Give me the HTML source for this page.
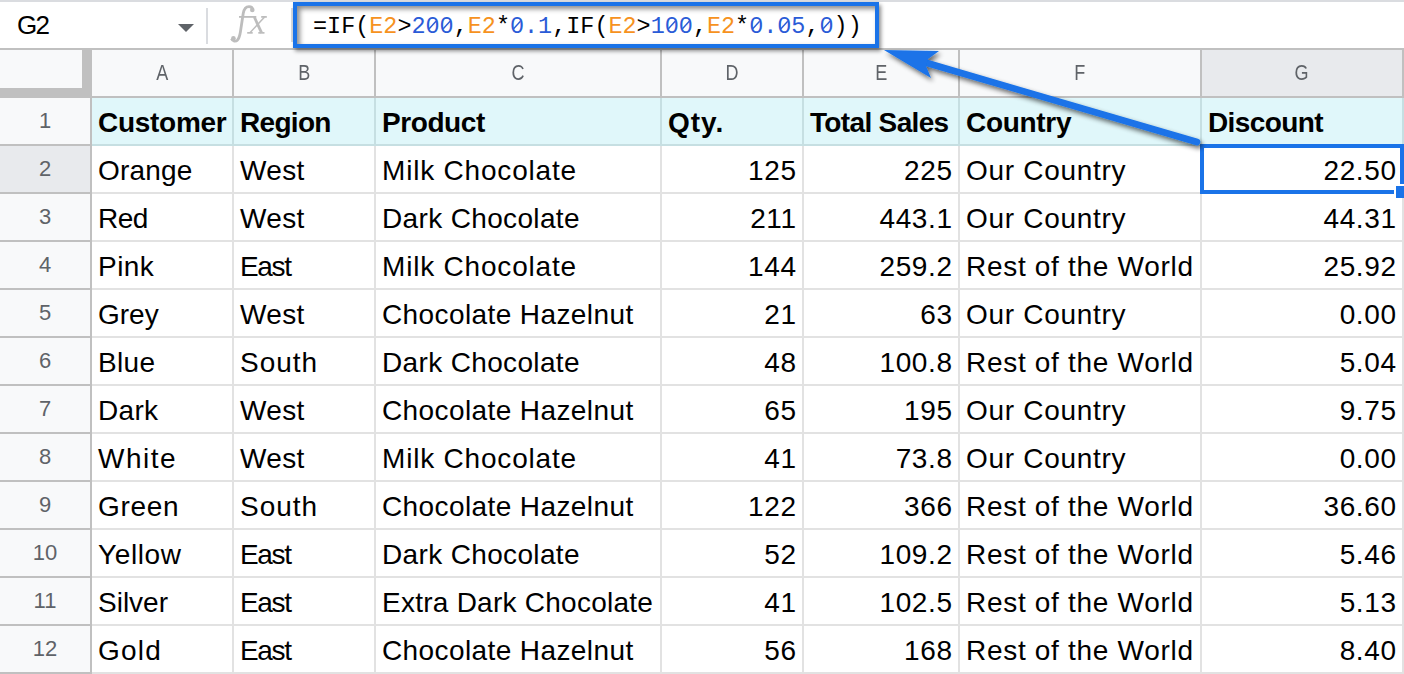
<!DOCTYPE html>
<html><head><meta charset="utf-8"><style>
html,body{margin:0;padding:0;}
body{width:1404px;height:674px;position:relative;overflow:hidden;background:#fff;font-family:"Liberation Sans",sans-serif;}
body>div{position:absolute;}
.nb{font-size:26px;line-height:34px;color:#000;}
.fx{font-family:"Liberation Serif",serif;font-style:italic;font-size:40px;line-height:46px;color:#bdbdbd;}
.ch{font-size:22px;line-height:46px;text-align:center;color:#5f6368;}
.ch span{display:inline-block;transform:scaleX(0.82);}
.rh{font-size:22px;line-height:46px;text-align:center;color:#5f6368;}
.c{font-size:28px;line-height:46px;color:#000;white-space:nowrap;}
.b{font-weight:bold;}
.n{text-align:right;}
.fbox{box-sizing:border-box;border:4px solid #1a73e8;box-shadow:2px 3px 4px rgba(0,0,0,.45), inset 3px 3px 5px rgba(0,0,0,.45);}
.ftxt{font-family:"Liberation Mono",monospace;font-size:23.45px;line-height:34px;white-space:nowrap;}
.k{color:#000;} .o{color:#f6921e;} .u{color:#2a5bd7;}
</style></head><body>
<div style="left:0px;top:0px;width:1404px;height:2px;background:#dadce0"></div>
<div style="left:0px;top:48px;width:1404px;height:2px;background:#c0c0c0"></div>
<div class="nb" style="left:17px;top:7.5px;letter-spacing:-1.6px">G2</div>
<svg style="position:absolute;left:178px;top:24px" width="16" height="8"><path d="M0 0H16L8 8Z" fill="#5f6368"/></svg>
<div style="left:206px;top:8px;width:2px;height:36px;background:#dadce0"></div>
<svg style="position:absolute;left:0;top:0" width="300" height="48"><g fill="none" stroke="#bdbdbd" stroke-linecap="butt">
<path d="M231.5 38.8 C232.6 41.4 235.6 41.9 237.6 39.9 C239.2 38.1 239.9 35 240.4 32 L243.2 13.5 C244 8.6 246 6.6 249 6.6 C251 6.6 252.5 7.6 252.7 9.6" stroke-width="2.8"/>
<line x1="254.3" y1="17" x2="261.6" y2="32.8" stroke-width="2.8"/>
<line x1="264.6" y1="17" x2="249.9" y2="32.8" stroke-width="1.5"/>
</g><g fill="#bdbdbd"><circle cx="233.4" cy="38.3" r="2.3"/><circle cx="252.3" cy="9.9" r="2.3"/>
<rect x="239" y="16" width="17.3" height="1.8"/><rect x="261.2" y="16" width="5.6" height="1.8"/>
<rect x="247.2" y="32" width="5.5" height="1.7"/><rect x="258.3" y="32" width="6.2" height="1.7"/></g></svg>
<div style="left:291px;top:8px;width:2px;height:34px;background:#dadce0"></div>
<div style="left:92px;top:50px;width:1312px;height:46px;background:#f8f9fa"></div>
<div style="left:1202px;top:50px;width:200px;height:46px;background:#e8eaed"></div>
<div style="left:0px;top:50px;width:82px;height:38px;background:#f8f9fa"></div>
<div class="ch" style="left:92px;top:50px;width:140px"><span>A</span></div>
<div class="ch" style="left:234px;top:50px;width:140px"><span>B</span></div>
<div class="ch" style="left:376px;top:50px;width:284px"><span>C</span></div>
<div class="ch" style="left:662px;top:50px;width:140px"><span>D</span></div>
<div class="ch" style="left:804px;top:50px;width:154px"><span>E</span></div>
<div class="ch" style="left:960px;top:50px;width:240px"><span>F</span></div>
<div class="ch" style="left:1202px;top:50px;width:200px"><span>G</span></div>
<div style="left:232px;top:50px;width:2px;height:46px;background:#c0c0c0"></div>
<div style="left:374px;top:50px;width:2px;height:46px;background:#c0c0c0"></div>
<div style="left:660px;top:50px;width:2px;height:46px;background:#c0c0c0"></div>
<div style="left:802px;top:50px;width:2px;height:46px;background:#c0c0c0"></div>
<div style="left:958px;top:50px;width:2px;height:46px;background:#c0c0c0"></div>
<div style="left:1200px;top:50px;width:2px;height:46px;background:#c0c0c0"></div>
<div style="left:1402px;top:50px;width:2px;height:46px;background:#c0c0c0"></div>
<div style="left:0px;top:96px;width:1404px;height:2px;background:#c0c0c0"></div>
<div style="left:82px;top:48px;width:10px;height:50px;background:#c0c0c0"></div>
<div style="left:0px;top:88px;width:92px;height:10px;background:#c0c0c0"></div>
<div style="left:0px;top:98px;width:90px;height:46px;background:#f8f9fa"></div>
<div style="left:0px;top:144px;width:90px;height:2px;background:#c0c0c0"></div>
<div class="rh" style="left:0px;top:98px;width:90px">1</div>
<div style="left:92px;top:98px;width:1312px;height:46px;background:#e0f7fa"></div>
<div style="left:92px;top:144px;width:1312px;height:2px;background:#c6dfe2"></div>
<div style="left:232px;top:98px;width:2px;height:46px;background:#c6dfe2"></div>
<div class="c b" style="left:98px;top:100px;letter-spacing:-0.286px">Customer</div>
<div style="left:374px;top:98px;width:2px;height:46px;background:#c6dfe2"></div>
<div class="c b" style="left:240px;top:100px;letter-spacing:-0.7px">Region</div>
<div style="left:660px;top:98px;width:2px;height:46px;background:#c6dfe2"></div>
<div class="c b" style="left:382px;top:100px;letter-spacing:-0.417px">Product</div>
<div style="left:802px;top:98px;width:2px;height:46px;background:#c6dfe2"></div>
<div class="c b" style="left:668px;top:100px;letter-spacing:1.0px">Qty.</div>
<div style="left:958px;top:98px;width:2px;height:46px;background:#c6dfe2"></div>
<div class="c b" style="left:810px;top:100px;letter-spacing:-0.66px">Total Sales</div>
<div style="left:1200px;top:98px;width:2px;height:46px;background:#c6dfe2"></div>
<div class="c b" style="left:966px;top:100px;letter-spacing:-0.3px">Country</div>
<div style="left:1402px;top:98px;width:2px;height:46px;background:#c6dfe2"></div>
<div class="c b" style="left:1208px;top:100px;letter-spacing:-0.614px">Discount</div>
<div style="left:0px;top:146px;width:90px;height:46px;background:#e8eaed"></div>
<div style="left:0px;top:192px;width:90px;height:2px;background:#c0c0c0"></div>
<div class="rh" style="left:0px;top:146px;width:90px">2</div>
<div style="left:92px;top:146px;width:1312px;height:46px;background:#ffffff"></div>
<div style="left:92px;top:192px;width:1312px;height:2px;background:#e2e2e2"></div>
<div style="left:232px;top:146px;width:2px;height:46px;background:#e2e2e2"></div>
<div class="c" style="left:98px;top:148px;letter-spacing:0.2px">Orange</div>
<div style="left:374px;top:146px;width:2px;height:46px;background:#e2e2e2"></div>
<div class="c" style="left:240px;top:148px;letter-spacing:0.333px">West</div>
<div style="left:660px;top:146px;width:2px;height:46px;background:#e2e2e2"></div>
<div class="c" style="left:382px;top:148px;letter-spacing:0.808px">Milk Chocolate</div>
<div style="left:802px;top:146px;width:2px;height:46px;background:#e2e2e2"></div>
<div class="c n" style="left:662px;top:148px;width:134.60px;letter-spacing:0.6px">125</div>
<div style="left:958px;top:146px;width:2px;height:46px;background:#e2e2e2"></div>
<div class="c n" style="left:804px;top:148px;width:148.60px;letter-spacing:0.6px">225</div>
<div style="left:1200px;top:146px;width:2px;height:46px;background:#e2e2e2"></div>
<div class="c" style="left:966px;top:148px;letter-spacing:0.69px">Our Country</div>
<div style="left:1402px;top:146px;width:2px;height:46px;background:#e2e2e2"></div>
<div class="c n" style="left:1202px;top:148px;width:194.60px;letter-spacing:0.6px">22.50</div>
<div style="left:0px;top:194px;width:90px;height:46px;background:#f8f9fa"></div>
<div style="left:0px;top:240px;width:90px;height:2px;background:#c0c0c0"></div>
<div class="rh" style="left:0px;top:194px;width:90px">3</div>
<div style="left:92px;top:194px;width:1312px;height:46px;background:#ffffff"></div>
<div style="left:92px;top:240px;width:1312px;height:2px;background:#e2e2e2"></div>
<div style="left:232px;top:194px;width:2px;height:46px;background:#e2e2e2"></div>
<div class="c" style="left:98px;top:196px;letter-spacing:-0.5px">Red</div>
<div style="left:374px;top:194px;width:2px;height:46px;background:#e2e2e2"></div>
<div class="c" style="left:240px;top:196px;letter-spacing:0.333px">West</div>
<div style="left:660px;top:194px;width:2px;height:46px;background:#e2e2e2"></div>
<div class="c" style="left:382px;top:196px;letter-spacing:0.354px">Dark Chocolate</div>
<div style="left:802px;top:194px;width:2px;height:46px;background:#e2e2e2"></div>
<div class="c n" style="left:662px;top:196px;width:134.60px;letter-spacing:0.6px">211</div>
<div style="left:958px;top:194px;width:2px;height:46px;background:#e2e2e2"></div>
<div class="c n" style="left:804px;top:196px;width:148.60px;letter-spacing:0.6px">443.1</div>
<div style="left:1200px;top:194px;width:2px;height:46px;background:#e2e2e2"></div>
<div class="c" style="left:966px;top:196px;letter-spacing:0.69px">Our Country</div>
<div style="left:1402px;top:194px;width:2px;height:46px;background:#e2e2e2"></div>
<div class="c n" style="left:1202px;top:196px;width:194.60px;letter-spacing:0.6px">44.31</div>
<div style="left:0px;top:242px;width:90px;height:46px;background:#f8f9fa"></div>
<div style="left:0px;top:288px;width:90px;height:2px;background:#c0c0c0"></div>
<div class="rh" style="left:0px;top:242px;width:90px">4</div>
<div style="left:92px;top:242px;width:1312px;height:46px;background:#ffffff"></div>
<div style="left:92px;top:288px;width:1312px;height:2px;background:#e2e2e2"></div>
<div style="left:232px;top:242px;width:2px;height:46px;background:#e2e2e2"></div>
<div class="c" style="left:98px;top:244px;letter-spacing:0.467px">Pink</div>
<div style="left:374px;top:242px;width:2px;height:46px;background:#e2e2e2"></div>
<div class="c" style="left:240px;top:244px;letter-spacing:-1.333px">East</div>
<div style="left:660px;top:242px;width:2px;height:46px;background:#e2e2e2"></div>
<div class="c" style="left:382px;top:244px;letter-spacing:0.808px">Milk Chocolate</div>
<div style="left:802px;top:242px;width:2px;height:46px;background:#e2e2e2"></div>
<div class="c n" style="left:662px;top:244px;width:134.60px;letter-spacing:0.6px">144</div>
<div style="left:958px;top:242px;width:2px;height:46px;background:#e2e2e2"></div>
<div class="c n" style="left:804px;top:244px;width:148.60px;letter-spacing:0.6px">259.2</div>
<div style="left:1200px;top:242px;width:2px;height:46px;background:#e2e2e2"></div>
<div class="c" style="left:966px;top:244px;letter-spacing:0.7px">Rest of the World</div>
<div style="left:1402px;top:242px;width:2px;height:46px;background:#e2e2e2"></div>
<div class="c n" style="left:1202px;top:244px;width:194.60px;letter-spacing:0.6px">25.92</div>
<div style="left:0px;top:290px;width:90px;height:46px;background:#f8f9fa"></div>
<div style="left:0px;top:336px;width:90px;height:2px;background:#c0c0c0"></div>
<div class="rh" style="left:0px;top:290px;width:90px">5</div>
<div style="left:92px;top:290px;width:1312px;height:46px;background:#ffffff"></div>
<div style="left:92px;top:336px;width:1312px;height:2px;background:#e2e2e2"></div>
<div style="left:232px;top:290px;width:2px;height:46px;background:#e2e2e2"></div>
<div class="c" style="left:98px;top:292px;letter-spacing:0.0px">Grey</div>
<div style="left:374px;top:290px;width:2px;height:46px;background:#e2e2e2"></div>
<div class="c" style="left:240px;top:292px;letter-spacing:0.333px">West</div>
<div style="left:660px;top:290px;width:2px;height:46px;background:#e2e2e2"></div>
<div class="c" style="left:382px;top:292px;letter-spacing:0.4px">Chocolate Hazelnut</div>
<div style="left:802px;top:290px;width:2px;height:46px;background:#e2e2e2"></div>
<div class="c n" style="left:662px;top:292px;width:134.60px;letter-spacing:0.6px">21</div>
<div style="left:958px;top:290px;width:2px;height:46px;background:#e2e2e2"></div>
<div class="c n" style="left:804px;top:292px;width:148.60px;letter-spacing:0.6px">63</div>
<div style="left:1200px;top:290px;width:2px;height:46px;background:#e2e2e2"></div>
<div class="c" style="left:966px;top:292px;letter-spacing:0.69px">Our Country</div>
<div style="left:1402px;top:290px;width:2px;height:46px;background:#e2e2e2"></div>
<div class="c n" style="left:1202px;top:292px;width:194.60px;letter-spacing:0.6px">0.00</div>
<div style="left:0px;top:338px;width:90px;height:46px;background:#f8f9fa"></div>
<div style="left:0px;top:384px;width:90px;height:2px;background:#c0c0c0"></div>
<div class="rh" style="left:0px;top:338px;width:90px">6</div>
<div style="left:92px;top:338px;width:1312px;height:46px;background:#ffffff"></div>
<div style="left:92px;top:384px;width:1312px;height:2px;background:#e2e2e2"></div>
<div style="left:232px;top:338px;width:2px;height:46px;background:#e2e2e2"></div>
<div class="c" style="left:98px;top:340px;letter-spacing:0.333px">Blue</div>
<div style="left:374px;top:338px;width:2px;height:46px;background:#e2e2e2"></div>
<div class="c" style="left:240px;top:340px;letter-spacing:1.0px">South</div>
<div style="left:660px;top:338px;width:2px;height:46px;background:#e2e2e2"></div>
<div class="c" style="left:382px;top:340px;letter-spacing:0.354px">Dark Chocolate</div>
<div style="left:802px;top:338px;width:2px;height:46px;background:#e2e2e2"></div>
<div class="c n" style="left:662px;top:340px;width:134.60px;letter-spacing:0.6px">48</div>
<div style="left:958px;top:338px;width:2px;height:46px;background:#e2e2e2"></div>
<div class="c n" style="left:804px;top:340px;width:148.60px;letter-spacing:0.6px">100.8</div>
<div style="left:1200px;top:338px;width:2px;height:46px;background:#e2e2e2"></div>
<div class="c" style="left:966px;top:340px;letter-spacing:0.7px">Rest of the World</div>
<div style="left:1402px;top:338px;width:2px;height:46px;background:#e2e2e2"></div>
<div class="c n" style="left:1202px;top:340px;width:194.60px;letter-spacing:0.6px">5.04</div>
<div style="left:0px;top:386px;width:90px;height:46px;background:#f8f9fa"></div>
<div style="left:0px;top:432px;width:90px;height:2px;background:#c0c0c0"></div>
<div class="rh" style="left:0px;top:386px;width:90px">7</div>
<div style="left:92px;top:386px;width:1312px;height:46px;background:#ffffff"></div>
<div style="left:92px;top:432px;width:1312px;height:2px;background:#e2e2e2"></div>
<div style="left:232px;top:386px;width:2px;height:46px;background:#e2e2e2"></div>
<div class="c" style="left:98px;top:388px;letter-spacing:0.333px">Dark</div>
<div style="left:374px;top:386px;width:2px;height:46px;background:#e2e2e2"></div>
<div class="c" style="left:240px;top:388px;letter-spacing:0.333px">West</div>
<div style="left:660px;top:386px;width:2px;height:46px;background:#e2e2e2"></div>
<div class="c" style="left:382px;top:388px;letter-spacing:0.4px">Chocolate Hazelnut</div>
<div style="left:802px;top:386px;width:2px;height:46px;background:#e2e2e2"></div>
<div class="c n" style="left:662px;top:388px;width:134.60px;letter-spacing:0.6px">65</div>
<div style="left:958px;top:386px;width:2px;height:46px;background:#e2e2e2"></div>
<div class="c n" style="left:804px;top:388px;width:148.60px;letter-spacing:0.6px">195</div>
<div style="left:1200px;top:386px;width:2px;height:46px;background:#e2e2e2"></div>
<div class="c" style="left:966px;top:388px;letter-spacing:0.69px">Our Country</div>
<div style="left:1402px;top:386px;width:2px;height:46px;background:#e2e2e2"></div>
<div class="c n" style="left:1202px;top:388px;width:194.60px;letter-spacing:0.6px">9.75</div>
<div style="left:0px;top:434px;width:90px;height:46px;background:#f8f9fa"></div>
<div style="left:0px;top:480px;width:90px;height:2px;background:#c0c0c0"></div>
<div class="rh" style="left:0px;top:434px;width:90px">8</div>
<div style="left:92px;top:434px;width:1312px;height:46px;background:#ffffff"></div>
<div style="left:92px;top:480px;width:1312px;height:2px;background:#e2e2e2"></div>
<div style="left:232px;top:434px;width:2px;height:46px;background:#e2e2e2"></div>
<div class="c" style="left:98px;top:436px;letter-spacing:1.5px">White</div>
<div style="left:374px;top:434px;width:2px;height:46px;background:#e2e2e2"></div>
<div class="c" style="left:240px;top:436px;letter-spacing:0.333px">West</div>
<div style="left:660px;top:434px;width:2px;height:46px;background:#e2e2e2"></div>
<div class="c" style="left:382px;top:436px;letter-spacing:0.808px">Milk Chocolate</div>
<div style="left:802px;top:434px;width:2px;height:46px;background:#e2e2e2"></div>
<div class="c n" style="left:662px;top:436px;width:134.60px;letter-spacing:0.6px">41</div>
<div style="left:958px;top:434px;width:2px;height:46px;background:#e2e2e2"></div>
<div class="c n" style="left:804px;top:436px;width:148.60px;letter-spacing:0.6px">73.8</div>
<div style="left:1200px;top:434px;width:2px;height:46px;background:#e2e2e2"></div>
<div class="c" style="left:966px;top:436px;letter-spacing:0.69px">Our Country</div>
<div style="left:1402px;top:434px;width:2px;height:46px;background:#e2e2e2"></div>
<div class="c n" style="left:1202px;top:436px;width:194.60px;letter-spacing:0.6px">0.00</div>
<div style="left:0px;top:482px;width:90px;height:46px;background:#f8f9fa"></div>
<div style="left:0px;top:528px;width:90px;height:2px;background:#c0c0c0"></div>
<div class="rh" style="left:0px;top:482px;width:90px">9</div>
<div style="left:92px;top:482px;width:1312px;height:46px;background:#ffffff"></div>
<div style="left:92px;top:528px;width:1312px;height:2px;background:#e2e2e2"></div>
<div style="left:232px;top:482px;width:2px;height:46px;background:#e2e2e2"></div>
<div class="c" style="left:98px;top:484px;letter-spacing:0.7px">Green</div>
<div style="left:374px;top:482px;width:2px;height:46px;background:#e2e2e2"></div>
<div class="c" style="left:240px;top:484px;letter-spacing:1.0px">South</div>
<div style="left:660px;top:482px;width:2px;height:46px;background:#e2e2e2"></div>
<div class="c" style="left:382px;top:484px;letter-spacing:0.4px">Chocolate Hazelnut</div>
<div style="left:802px;top:482px;width:2px;height:46px;background:#e2e2e2"></div>
<div class="c n" style="left:662px;top:484px;width:134.60px;letter-spacing:0.6px">122</div>
<div style="left:958px;top:482px;width:2px;height:46px;background:#e2e2e2"></div>
<div class="c n" style="left:804px;top:484px;width:148.60px;letter-spacing:0.6px">366</div>
<div style="left:1200px;top:482px;width:2px;height:46px;background:#e2e2e2"></div>
<div class="c" style="left:966px;top:484px;letter-spacing:0.7px">Rest of the World</div>
<div style="left:1402px;top:482px;width:2px;height:46px;background:#e2e2e2"></div>
<div class="c n" style="left:1202px;top:484px;width:194.60px;letter-spacing:0.6px">36.60</div>
<div style="left:0px;top:530px;width:90px;height:46px;background:#f8f9fa"></div>
<div style="left:0px;top:576px;width:90px;height:2px;background:#c0c0c0"></div>
<div class="rh" style="left:0px;top:530px;width:90px">10</div>
<div style="left:92px;top:530px;width:1312px;height:46px;background:#ffffff"></div>
<div style="left:92px;top:576px;width:1312px;height:2px;background:#e2e2e2"></div>
<div style="left:232px;top:530px;width:2px;height:46px;background:#e2e2e2"></div>
<div class="c" style="left:98px;top:532px;letter-spacing:0.6px">Yellow</div>
<div style="left:374px;top:530px;width:2px;height:46px;background:#e2e2e2"></div>
<div class="c" style="left:240px;top:532px;letter-spacing:-1.333px">East</div>
<div style="left:660px;top:530px;width:2px;height:46px;background:#e2e2e2"></div>
<div class="c" style="left:382px;top:532px;letter-spacing:0.354px">Dark Chocolate</div>
<div style="left:802px;top:530px;width:2px;height:46px;background:#e2e2e2"></div>
<div class="c n" style="left:662px;top:532px;width:134.60px;letter-spacing:0.6px">52</div>
<div style="left:958px;top:530px;width:2px;height:46px;background:#e2e2e2"></div>
<div class="c n" style="left:804px;top:532px;width:148.60px;letter-spacing:0.6px">109.2</div>
<div style="left:1200px;top:530px;width:2px;height:46px;background:#e2e2e2"></div>
<div class="c" style="left:966px;top:532px;letter-spacing:0.7px">Rest of the World</div>
<div style="left:1402px;top:530px;width:2px;height:46px;background:#e2e2e2"></div>
<div class="c n" style="left:1202px;top:532px;width:194.60px;letter-spacing:0.6px">5.46</div>
<div style="left:0px;top:578px;width:90px;height:46px;background:#f8f9fa"></div>
<div style="left:0px;top:624px;width:90px;height:2px;background:#c0c0c0"></div>
<div class="rh" style="left:0px;top:578px;width:90px">11</div>
<div style="left:92px;top:578px;width:1312px;height:46px;background:#ffffff"></div>
<div style="left:92px;top:624px;width:1312px;height:2px;background:#e2e2e2"></div>
<div style="left:232px;top:578px;width:2px;height:46px;background:#e2e2e2"></div>
<div class="c" style="left:98px;top:580px;letter-spacing:0.0px">Silver</div>
<div style="left:374px;top:578px;width:2px;height:46px;background:#e2e2e2"></div>
<div class="c" style="left:240px;top:580px;letter-spacing:-1.333px">East</div>
<div style="left:660px;top:578px;width:2px;height:46px;background:#e2e2e2"></div>
<div class="c" style="left:382px;top:580px;letter-spacing:0.253px">Extra Dark Chocolate</div>
<div style="left:802px;top:578px;width:2px;height:46px;background:#e2e2e2"></div>
<div class="c n" style="left:662px;top:580px;width:134.60px;letter-spacing:0.6px">41</div>
<div style="left:958px;top:578px;width:2px;height:46px;background:#e2e2e2"></div>
<div class="c n" style="left:804px;top:580px;width:148.60px;letter-spacing:0.6px">102.5</div>
<div style="left:1200px;top:578px;width:2px;height:46px;background:#e2e2e2"></div>
<div class="c" style="left:966px;top:580px;letter-spacing:0.7px">Rest of the World</div>
<div style="left:1402px;top:578px;width:2px;height:46px;background:#e2e2e2"></div>
<div class="c n" style="left:1202px;top:580px;width:194.60px;letter-spacing:0.6px">5.13</div>
<div style="left:0px;top:626px;width:90px;height:46px;background:#f8f9fa"></div>
<div style="left:0px;top:672px;width:90px;height:2px;background:#c0c0c0"></div>
<div class="rh" style="left:0px;top:626px;width:90px">12</div>
<div style="left:92px;top:626px;width:1312px;height:46px;background:#ffffff"></div>
<div style="left:92px;top:672px;width:1312px;height:2px;background:#e2e2e2"></div>
<div style="left:232px;top:626px;width:2px;height:46px;background:#e2e2e2"></div>
<div class="c" style="left:98px;top:628px;letter-spacing:1.2px">Gold</div>
<div style="left:374px;top:626px;width:2px;height:46px;background:#e2e2e2"></div>
<div class="c" style="left:240px;top:628px;letter-spacing:-1.333px">East</div>
<div style="left:660px;top:626px;width:2px;height:46px;background:#e2e2e2"></div>
<div class="c" style="left:382px;top:628px;letter-spacing:0.4px">Chocolate Hazelnut</div>
<div style="left:802px;top:626px;width:2px;height:46px;background:#e2e2e2"></div>
<div class="c n" style="left:662px;top:628px;width:134.60px;letter-spacing:0.6px">56</div>
<div style="left:958px;top:626px;width:2px;height:46px;background:#e2e2e2"></div>
<div class="c n" style="left:804px;top:628px;width:148.60px;letter-spacing:0.6px">168</div>
<div style="left:1200px;top:626px;width:2px;height:46px;background:#e2e2e2"></div>
<div class="c" style="left:966px;top:628px;letter-spacing:0.7px">Rest of the World</div>
<div style="left:1402px;top:626px;width:2px;height:46px;background:#e2e2e2"></div>
<div class="c n" style="left:1202px;top:628px;width:194.60px;letter-spacing:0.6px">8.40</div>
<div style="left:90px;top:98px;width:2px;height:576px;background:#c0c0c0"></div>
<div style="left:1200px;top:144px;width:204px;height:50px;border:4px solid #1a73e8;box-sizing:border-box"></div>
<div style="left:1394px;top:184px;width:16px;height:14px;background:#fff;"></div>
<div style="left:1396px;top:186px;width:12px;height:12px;background:#1a73e8;"></div>
<div class="fbox" style="left:293px;top:2px;width:586px;height:46px"></div>
<div class="ftxt" style="left:313px;top:10px"><span class="k">=IF(</span><span class="o">E2</span><span class="k">&gt;</span><span class="u">200</span><span class="k">,</span><span class="o">E2</span><span class="k">*</span><span class="u">0.1</span><span class="k">,IF(</span><span class="o">E2</span><span class="k">&gt;</span><span class="u">100</span><span class="k">,</span><span class="o">E2</span><span class="k">*</span><span class="u">0.05</span><span class="k">,</span><span class="u">0</span><span class="k">))</span></div>
<svg style="position:absolute;left:0;top:0" width="900" height="48"><g stroke="#2a5bd7" stroke-width="1.4"><rect x="430.59" y="23" width="4" height="4" fill="#fff" stroke="none"/><line x1="429.19" y1="28.7" x2="435.99" y2="21.3"/><rect x="444.66" y="23" width="4" height="4" fill="#fff" stroke="none"/><line x1="443.26" y1="28.7" x2="450.06" y2="21.3"/><rect x="515.01" y="23" width="4" height="4" fill="#fff" stroke="none"/><line x1="513.62" y1="28.7" x2="520.41" y2="21.3"/><rect x="669.78" y="23" width="4" height="4" fill="#fff" stroke="none"/><line x1="668.38" y1="28.7" x2="675.18" y2="21.3"/><rect x="683.86" y="23" width="4" height="4" fill="#fff" stroke="none"/><line x1="682.46" y1="28.7" x2="689.25" y2="21.3"/><rect x="754.20" y="23" width="4" height="4" fill="#fff" stroke="none"/><line x1="752.80" y1="28.7" x2="759.60" y2="21.3"/><rect x="782.34" y="23" width="4" height="4" fill="#fff" stroke="none"/><line x1="780.94" y1="28.7" x2="787.74" y2="21.3"/><rect x="824.55" y="23" width="4" height="4" fill="#fff" stroke="none"/><line x1="823.15" y1="28.7" x2="829.95" y2="21.3"/></g></svg>
<svg style="position:absolute;left:0;top:0" width="1404" height="674">
<defs><filter id="sh" x="-20%" y="-20%" width="140%" height="140%"><feGaussianBlur in="SourceAlpha" stdDeviation="2.6"/><feOffset dx="2" dy="3"/><feComponentTransfer><feFuncA type="linear" slope="0.6"/></feComponentTransfer><feMerge><feMergeNode/><feMergeNode in="SourceGraphic"/></feMerge></filter></defs>
<g filter="url(#sh)">
<line x1="927" y1="63" x2="1197" y2="142" stroke="#1a73e8" stroke-width="6.6" stroke-linecap="round"/>
<path d="M884 50 L939 51 L928 59 L926 66 L931 78 Z" fill="#1a73e8"/>
</g></svg>
</body></html>
